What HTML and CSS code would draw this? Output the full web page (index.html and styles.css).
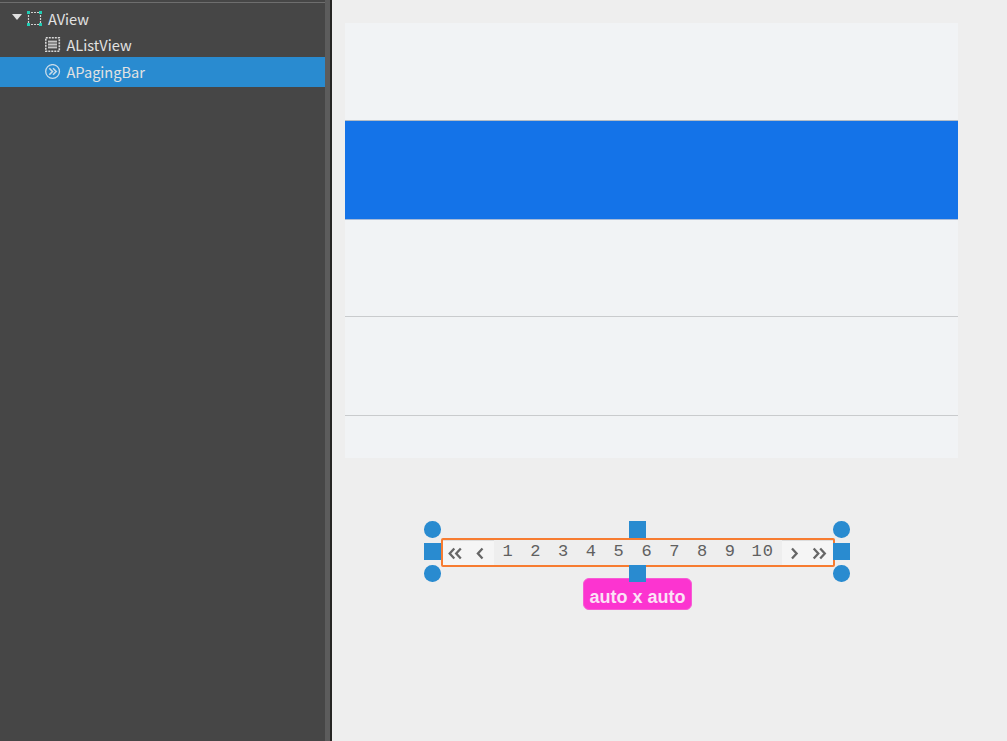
FILE: index.html
```
<!DOCTYPE html>
<html lang="en">
<head>
<meta charset="utf-8">
<title>Layout editor</title>
<link rel="stylesheet" href="styles.css">
</head>
<body>
<div class="app">
  <aside class="tree">
    <div class="tree-row root">
      <svg class="arrow" width="10" height="6" viewBox="0 0 10 6"><path d="M0 0h10L5 6z" fill="#e0e0e0"/></svg>
      <svg class="icon" width="16" height="16" viewBox="0 0 16 16"><path d="M4 1.500h8M4 13.500h8M1.500 4v8M13.500 4v8" fill="none" stroke="#d0d0d0" stroke-width="1.200" stroke-dasharray="2 1"/><path d="M0 0h3v3H0zM12 0h3v3h-3zM0 12h3v3H0zM12 12h3v3h-3z" fill="#20cdb5"/></svg>
      <span>AView</span>
    </div>
    <div class="tree-row child">
      <svg class="icon" width="16" height="16" viewBox="0 0 16 16"><path d="M.8.800h13.500v13.500H.800z" fill="none" stroke="#d8d8d8" stroke-width="1.600" stroke-dasharray="2 1"/><path d="M3 3.500h9v8H3z" fill="#777"/><path d="M3 4.500h9M3 7.500h9M3 10.500h9" stroke="#c6c6c6" stroke-width="1.300"/></svg>
      <span>AListView</span>
    </div>
    <div class="tree-row child selected">
      <svg class="icon" width="16" height="16" viewBox="0 0 16 16"><circle cx="7.600" cy="7.500" r="6.900" fill="none" stroke="#c9dcea" stroke-width="1.300"/><path d="M4.300 4.300l3.200 3.200-3.200 3.200M8 4.300l3.200 3.200L8 10.700" fill="none" stroke="#c9dcea" stroke-width="1.600"/></svg>
      <span>APagingBar</span>
    </div>
  </aside>
  <div class="splitter"></div>
  <main class="canvas">
    <div class="list">
      <div class="item"></div>
      <div class="item active"></div>
      <div class="item"></div>
      <div class="item"></div>
      <div class="item last"></div>
    </div>
    <div class="paging">
      <div class="nav"><svg width="26" height="24" viewBox="0 0 26 24"><path d="M12.300 7.500L7.700 12.500l4.600 5M18.800 7.500l-4.600 5 4.600 5"/></svg></div>
      <div class="nav"><svg width="26" height="24" viewBox="0 0 26 24"><path d="M15.500 7.500l-4.600 5 4.600 5"/></svg></div>
      <div class="pages"><span>1</span><span>2</span><span>3</span><span>4</span><span>5</span><span>6</span><span>7</span><span>8</span><span>9</span><span class="ten">10</span></div>
      <div class="nav"><svg width="26" height="24" viewBox="0 0 26 24"><path d="M11 7.500l4.600 5-4.600 5"/></svg></div>
      <div class="nav"><svg width="26" height="24" viewBox="0 0 26 24"><path d="M7.700 7.500l4.600 5-4.600 5M14.200 7.500l4.600 5-4.600 5"/></svg></div>
      <div class="size-label">auto x auto</div>
      <i class="handle dot top left"></i>
      <i class="handle mid left"></i>
      <i class="handle dot bottom left"></i>
      <i class="handle top center"></i>
      <i class="handle bottom center"></i>
      <i class="handle dot top right"></i>
      <i class="handle mid right"></i>
      <i class="handle dot bottom right"></i>
    </div>
  </main>
</div>
</body>
</html>
```
FILE: styles.css
```
* { box-sizing: border-box; }
body { margin: 0; overflow: hidden; background: #eee; }
.app { display: flex; width: 1007px; height: 741px; }
.tree {
  width: 325px;
  padding-top: 2px;
  background: linear-gradient(#6e6e6e, #6e6e6e) 0 2px / 100% 1px no-repeat #464646;
  color: #e2e2e2;
  font: 14.600px "Noto Sans CJK KR", "Noto Sans", sans-serif;
}
.tree-row { display: flex; align-items: center; height: 28px; line-height: 26px; }
.root { height: 30px; padding: 4px 0 0 12px; }
.root .arrow { margin: 0 5px 4px 0; }
.root .icon { margin-right: 5px; }
.child { height: 25px; padding-left: 45px; }
.child .icon { margin-right: 5.500px; }
.selected { height: 30px; background: #298bd0; }
.splitter { width: 7px; background: #5c5c5c; border-right: 2px solid #262523; }
.canvas { flex: 1; padding: 23px 0 0 12.600px; background: #eee; }
.list {
  display: grid;
  grid-template-rows: 98px 98px 98px 99px 42px;
  width: 613px;
  height: 435px;
  background: #f1f3f5;
}
.item { border-bottom: 1px solid #c9cbcd; }
.item:first-child { border-bottom-color: #b3bcc5; }
.item.active { background: #1473e8; border-bottom: 0; }
.item:nth-child(3) { border-top: 1px solid #a7bbd9; }
.item.last { border: 0; }
.paging {
  position: relative;
  display: flex;
  width: 394px;
  height: 29px;
  margin: 80px 0 0 96px;
  border: 2px solid #f77c31;
  border-radius: 2px;
}
.nav { width: 25.500px; height: 25px; background: #f5f5f5; border-top: 1px solid #ddd; }
.nav svg { display: block; margin-left: -1px; }
.nav path { fill: none; stroke: #666; stroke-width: 2.300; }
.pages {
  flex: 1;
  display: flex;
  color: #606060;
  font: 17px/24px "Liberation Mono", monospace;
}
.pages span { width: 27.800px; text-align: center; }
.pages .ten { flex: 1; letter-spacing: 1px; }
.handle { position: absolute; width: 16.500px; height: 16.500px; background: #298bd0; }
.dot { border-radius: 50%; }
.top { top: -18.600px; }
.mid { top: 3px; }
.bottom { top: 25.200px; }
.left { left: -18.600px; }
.center { left: 186.500px; }
.right { left: 390.500px; }
.size-label {
  position: absolute;
  top: 37.500px;
  left: 140.500px;
  width: 109px;
  height: 32px;
  border: 1px solid #f75bd4;
  border-radius: 6px;
  background: #fc34d0;
  color: #fbe3f6;
  font: bold 18px/36px "Liberation Sans", Arial, sans-serif;
  text-align: center;
  white-space: nowrap;
}
```
